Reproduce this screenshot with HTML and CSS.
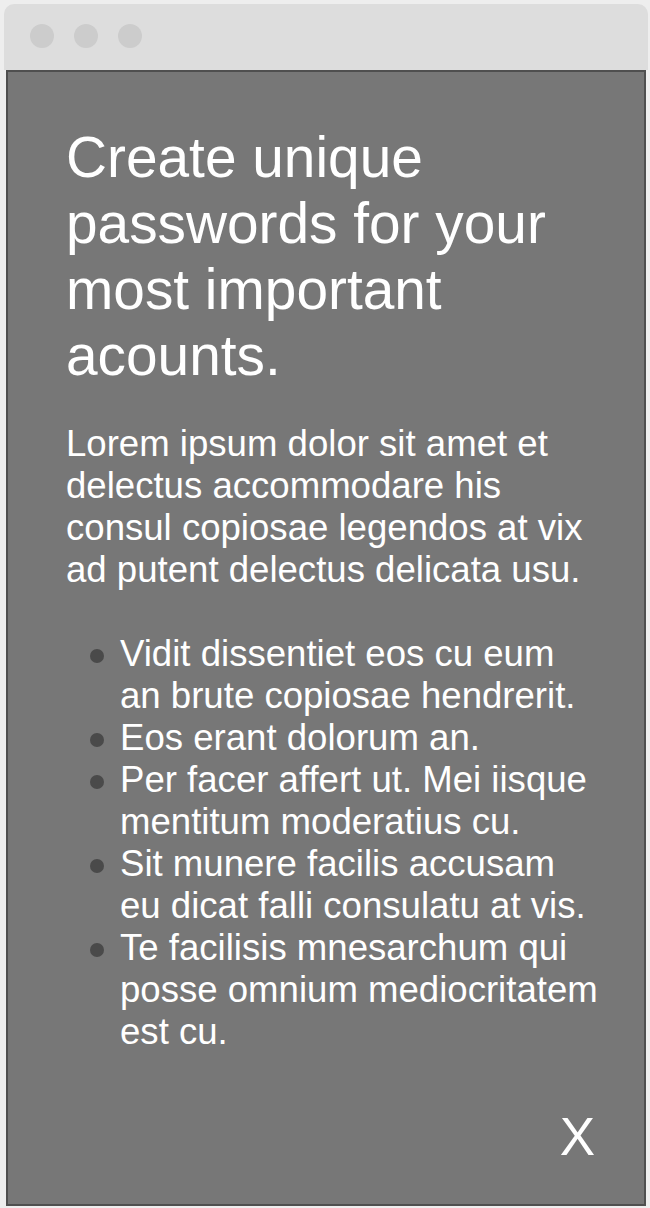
FILE: index.html
```html
<!DOCTYPE html>
<html>
<head>
<meta charset="utf-8">
<link rel="stylesheet" href="styles.css">
</head>
<body>
<div class="window">
  <div class="titlebar">
    <span class="dot"></span><span class="dot"></span><span class="dot"></span>
  </div>
  <div class="panel">
    <h1 class="title">Create unique passwords for your most important acounts.</h1>
    <p class="intro">Lorem ipsum dolor sit amet et delectus accommodare his consul copiosae legendos at vix ad putent delectus delicata usu.</p>
    <ul class="points">
      <li>Vidit dissentiet eos cu eum an brute copiosae hendrerit.</li>
      <li>Eos erant dolorum an.</li>
      <li>Per facer affert ut. Mei iisque mentitum moderatius cu.</li>
      <li>Sit munere facilis accusam eu dicat falli consulatu at vis.</li>
      <li>Te facilisis mnesarchum qui posse omnium mediocritatem est cu.</li>
    </ul>
    <div class="footer"><span class="close">X</span></div>
  </div>
</div>
</body>
</html>
```
FILE: styles.css
```css
html, body {
  margin: 0;
  padding: 0;
  background: #eeeeee;
}
body {
  font-family: "Liberation Sans", Arial, sans-serif;
}
.window {
  margin: 4px 2px 0 4px;
  height: 1202px;
  display: flex;
  flex-direction: column;
}
.titlebar {
  height: 66px;
  box-sizing: border-box;
  background: #dddddd;
  border-radius: 10px 10px 0 0;
  padding: 20px 0 0 26px;
  display: flex;
  gap: 20px;
}
.dot {
  width: 24px;
  height: 24px;
  border-radius: 50%;
  background: #cccccc;
}
.panel {
  flex: 1;
  margin: 0 2px;
  background: #777777;
  border: 2px solid #4f4f4f;
  padding: 53px 41px 0 58px;
  display: flex;
  flex-direction: column;
  color: #ffffff;
}
.title {
  margin: 0 0 34px 0;
  font-size: 56.8px;
  line-height: 66px;
  font-weight: normal;
}
.intro {
  margin: 0 0 42px 0;
  font-size: 36.6px;
  line-height: 42px;
}
.points {
  margin: 0;
  padding: 0 0 0 24px;
  list-style: none;
  font-size: 36.6px;
  line-height: 42px;
}
.points li {
  display: flex;
  gap: 16px;
}
.points li::before {
  content: "";
  flex: none;
  width: 14px;
  height: 14px;
  margin-top: 16px;
  border-radius: 50%;
  background: #4a4a4a;
}
.footer {
  margin-top: auto;
  display: flex;
  justify-content: flex-end;
  padding: 0 8px 37px 0;
}
.close {
  font-size: 53px;
  line-height: 60px;
}
```
